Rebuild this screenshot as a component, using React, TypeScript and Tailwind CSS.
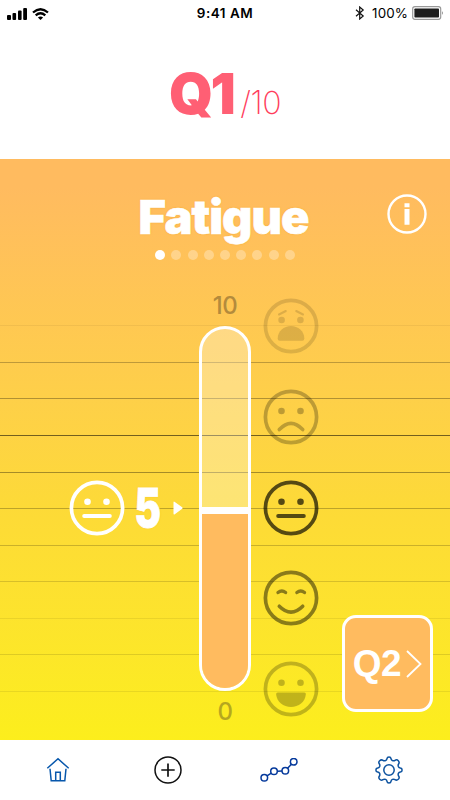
import type { ReactNode } from 'react';

type Mood = 'awful' | 'sad' | 'neutral' | 'happy' | 'great';

const moods: { mood: Mood; tone: string }[] = [
  { mood: 'awful', tone: 'opacity-[0.13]' },
  { mood: 'sad', tone: 'opacity-25' },
  { mood: 'neutral', tone: 'opacity-[0.66]' },
  { mood: 'happy', tone: 'opacity-45' },
  { mood: 'great', tone: 'opacity-[0.23]' },
];

const rules = [
  'bg-black/5',
  'bg-black/25',
  'bg-black/30',
  'bg-black/55',
  'bg-black/35',
  'bg-black/25',
  'bg-black/20',
  'bg-black/15',
  'bg-black/7',
  'bg-black/12',
  'bg-black/8',
];

const features: Record<Mood, ReactNode> = {
  awful: (
    <>
      <path d="M-12 -11.5 L-5.2 -15 M5.2 -15 L12 -11.5" fill="none" stroke="currentColor" strokeWidth="2" strokeLinecap="round" />
      <circle cx="-9.4" cy="-6" r="3.3" />
      <circle cx="9.4" cy="-6" r="3.3" />
      <path d="M-13.3 12.5 C-13.3 5 -7 0 0 0 S13.3 5 13.3 12.5 Q13.3 14.7 11.3 14.7 H-11.3 Q-13.3 14.7 -13.3 12.5Z" />
    </>
  ),
  sad: (
    <>
      <circle cx="-9.5" cy="-6" r="3.3" />
      <circle cx="9.5" cy="-6" r="3.3" />
      <path d="M-11.7 12.6 Q0 0.2 11.7 12.6" fill="none" stroke="currentColor" strokeWidth="3.6" strokeLinecap="round" />
    </>
  ),
  neutral: (
    <>
      <circle cx="-9.5" cy="-6.3" r="3.3" />
      <circle cx="9.5" cy="-6.3" r="3.3" />
      <path d="M-12.8 8 H12.8" stroke="currentColor" strokeWidth="4" strokeLinecap="round" />
    </>
  ),
  happy: (
    <>
      <path d="M-13 -5.4 Q-9.2 -8.6 -5.4 -5.4 M5.9 -5.4 Q9.7 -8.6 13.5 -5.4" fill="none" stroke="currentColor" strokeWidth="3.3" strokeLinecap="round" />
      <path d="M-11.7 8.2 Q0 20 11.7 8.2" fill="none" stroke="currentColor" strokeWidth="3.6" strokeLinecap="round" />
    </>
  ),
  great: (
    <>
      <circle cx="-9.5" cy="-6.3" r="3.3" />
      <circle cx="9.5" cy="-6.3" r="3.3" />
      <path d="M-13.4 3.5 H13.4 Q14.9 3.5 14.9 5 C14.3 13 7.5 18 0 18 S-14.3 13 -14.9 5 Q-14.9 3.5 -13.4 3.5Z" />
    </>
  ),
};

function Face({ mood, className }: { mood: Mood; className: string }) {
  return (
    <svg viewBox="-28 -28 56 56" fill="currentColor" className={`h-14 w-14 shrink-0 ${className}`}>
      <circle r="25.6" fill="none" stroke="currentColor" strokeWidth="3.7" />
      {features[mood]}
    </svg>
  );
}

function StatusBar() {
  return (
    <div className="grid h-[27px] grid-cols-3 items-center px-[7px] text-[13px] text-black">
      <div className="flex items-center gap-[5px]">
        <svg width="20" height="12" viewBox="0 0 20 12">
          <rect x="0" y="7" width="4" height="5" rx="1" />
          <rect x="5.5" y="5" width="3.6" height="7" rx="1" />
          <rect x="11" y="2.6" width="3.6" height="9.4" rx="1" />
          <rect x="16.2" y="0" width="3.8" height="12" rx="1" />
        </svg>
        <svg width="17" height="12" viewBox="0 0 17 12" fill="none" stroke="#000" strokeWidth="2.3">
          <path d="M1 4.5 Q8.5 -2 16 4.5" />
          <path d="M3.7 7.4 Q8.5 3.2 13.3 7.4" />
          <path d="M8.5 12 L5.9 9.4 Q8.5 7.4 11.1 9.4Z" fill="#000" stroke="none" />
        </svg>
      </div>
      <div className="text-center text-[13.5px] font-semibold tracking-[0.5px] whitespace-nowrap">9:41 AM</div>
      <div className="flex items-center justify-end">
        <svg width="10" height="14" viewBox="0 0 10 14" fill="none" stroke="#111" strokeWidth="1.2" className="mr-[7px]">
          <path d="M1 3.8 L8.2 10 L4.7 13 V1 L8.2 4 L1 10.2" />
        </svg>
        <span className="mr-1 text-[13.4px] tracking-[0.1px]">100%</span>
        <svg width="32" height="14" viewBox="0 0 32 14" className="mr-[-1px]">
          <rect x="0.7" y="0.7" width="28" height="12.6" rx="2.2" fill="none" stroke="#999" strokeWidth="1.2" />
          <rect x="2.4" y="2.4" width="24.6" height="9.2" rx="0.8" fill="#1d1d1d" />
          <path d="M30 5 Q31.8 7 30 9Z" fill="#777" />
        </svg>
      </div>
    </div>
  );
}

function TabBar() {
  return (
    <nav className="grid h-[60px] grid-cols-4 items-center justify-items-center bg-white pr-[6px] pb-px pl-[3px]">
      <svg width="24" height="26" viewBox="0 0 24 26" fill="none" stroke="#0757ac" strokeWidth="1.5">
        <path d="M1.3 11.3 L12 1.8 L22.7 11.3 M4 11.7 L5.2 23.8 H18.8 L20 11.7 M9.7 23.5 V15.3 H14.3 V23.5" />
      </svg>
      <svg width="28" height="28" viewBox="0 0 28 28" fill="none" stroke="#111" strokeWidth="1.5">
        <circle cx="14" cy="14" r="13" />
        <path d="M14 7.4 V20.8 M7.3 14 H20.7" strokeWidth="1.7" />
      </svg>
      <svg width="38" height="24" viewBox="0 0 38 24" fill="none" stroke="#063a9c" strokeWidth="1.5">
        <circle cx="4.3" cy="19.7" r="3.3" />
        <circle cx="14" cy="13.3" r="3.3" />
        <circle cx="25.3" cy="12.7" r="3.3" />
        <circle cx="33.7" cy="3.8" r="3.3" />
        <path d="M7 17.8 L11.3 15.2 M17.3 13.2 L22 13 M27.6 10.3 L31.4 6.2" />
      </svg>
      <svg width="28" height="28" viewBox="-14 -14 28 28" fill="none" stroke="#0c529f" strokeWidth="1.5" strokeLinejoin="round">
        <circle r="5.2" />
        <path d="M-3.4 -9.4 Q-2.2 -10 -2 -11.4 Q-1.8 -13.1 0 -13.1 T2 -11.4 Q2.2 -10 3.4 -9.4 Q4.9 -8.8 6 -9.6 Q7.8 -10.9 9.3 -9.3 T9.6 -6 Q8.8 -4.9 9.4 -3.4 Q10 -2.2 11.4 -2 Q13.1 -1.8 13.1 0 T11.4 2 Q10 2.2 9.4 3.4 Q8.8 4.9 9.6 6 Q10.9 7.8 9.3 9.3 T6 9.6 Q4.9 8.8 3.4 9.4 Q2.2 10 2 11.4 Q1.8 13.1 0 13.1 T-2 11.4 Q-2.2 10 -3.4 9.4 Q-4.9 8.8 -6 9.6 Q-7.8 10.9 -9.3 9.3 T-9.6 6 Q-8.8 4.9 -9.4 3.4 Q-10 2.2 -11.4 2 Q-13.1 1.8 -13.1 0 T-11.4 -2 Q-10 -2.2 -9.4 -3.4 Q-8.8 -4.9 -9.6 -6 Q-10.9 -7.8 -9.3 -9.3 T-6 -9.6 Q-4.9 -8.8 -3.4 -9.4Z" />
      </svg>
    </nav>
  );
}

export default function App() {
  return (
    <div className="flex h-[800px] w-[450px] flex-col overflow-hidden bg-white font-['Inter',sans-serif]">
      <StatusBar />

      <header className="flex h-[132px] items-baseline justify-center pt-[33px] text-[#ff5f74]">
        <span className="text-[56px] leading-[68px] font-black tracking-[-2.6px]">Q1</span>
        <span className="ml-[7px] text-[32px] font-extralight tracking-[-0.5px] text-[#ff3d5c]">/10</span>
      </header>

      <main className="relative flex h-[581px] flex-col bg-linear-to-b from-[#ffbb5f] from-5% via-[#fdda37] via-60% to-[#fcee1c]">
        {/* Ruled background */}
        <div className="absolute inset-x-0 top-[166.4px] flex h-[366.6px] flex-col justify-between">
          {rules.map((tone, index) => (
            <div key={index} className={`h-px w-full ${tone}`}></div>
          ))}
        </div>

        <h1 className="mt-[28px] text-center text-[47px] leading-[60px] font-black tracking-[-1px] text-white [text-shadow:0_0_2px_#f3a21a] [-webkit-text-stroke:0.6px_#fff]">
          <span className="relative left-[-1.5px]">Fatigue</span>
        </h1>
        <div className="mt-[3px] flex justify-center gap-[6.2px]">
          {Array.from({ length: 9 }, (_, index) => (
            <span key={index} className={`h-[10px] w-[10px] rounded-full ${index === 0 ? 'bg-white' : 'bg-white/30'}`}></span>
          ))}
        </div>

        <div className="relative mt-[33px] grid h-[436px] grid-cols-[199px_52px_199px]">
          {/* Current answer */}
          <div className="mt-[187px] flex h-14 items-center pl-[68.5px] text-white">
            <Face mood="neutral" className="" />
            <span className="ml-[9px] flex w-[28px] justify-center text-[53px] leading-none font-black [text-shadow:0_0_2px_#f3b21a] [-webkit-text-stroke:0.8px_#fff]">
              <span className="inline-block scale-x-75">5</span>
            </span>
            <svg width="10" height="14" viewBox="0 0 10 14" fill="currentColor" className="ml-[11.5px]">
              <path d="M0.5 1.6 Q0.5 0 1.8 1 L9.2 6.2 Q10 7 9.2 7.8 L1.8 13.2 Q0.5 14 0.5 12.6Z" />
            </svg>
          </div>

          {/* Scale */}
          <div className="flex flex-col items-center text-[24px] font-medium tracking-[-0.5px]">
            <span className="h-[33px] pt-px leading-[24px] text-[#b48b3c]">10</span>
            <div className="flex h-[365px] w-[52px] flex-col overflow-hidden rounded-full border-[3px] border-white bg-white/30">
              <div className="h-[178px]"></div>
              <div className="h-[6.5px] bg-white"></div>
              <div className="flex-1 bg-[#ffbb5f]"></div>
            </div>
            <span className="mt-[9px] leading-[24px] text-[#b5a71f]">0</span>
          </div>

          <div className="flex flex-col gap-[34.75px] pt-[5px] pl-[11.5px] text-black">
            {moods.map(({ mood, tone }) => (
              <Face key={mood} mood={mood} className={tone} />
            ))}
          </div>
        </div>

        <button className="absolute top-[35px] right-[23px] h-[40px] w-[40px]">
          <svg viewBox="0 0 40 40" fill="none" stroke="#fff">
            <circle cx="20" cy="20" r="18.5" strokeWidth="2.4" />
            <path d="M20 9.2 V13.2 M20 15 V30.8" strokeWidth="5" />
          </svg>
        </button>

        <button className="absolute top-[456px] right-[17px] flex h-[97px] w-[91px] items-center justify-center gap-[5px] rounded-[14px] border-[3.5px] border-white bg-[#ffbb5f] text-white">
          <span className="font-['Liberation_Sans',sans-serif] text-[37px] font-bold tracking-[-0.5px]">Q2</span>
          <svg width="16" height="28" viewBox="0 0 16 28" fill="none" stroke="currentColor" strokeWidth="1.8">
            <path d="M1 1 L14.5 14 L1 27" />
          </svg>
        </button>
      </main>

      <TabBar />
    </div>
  );
}
